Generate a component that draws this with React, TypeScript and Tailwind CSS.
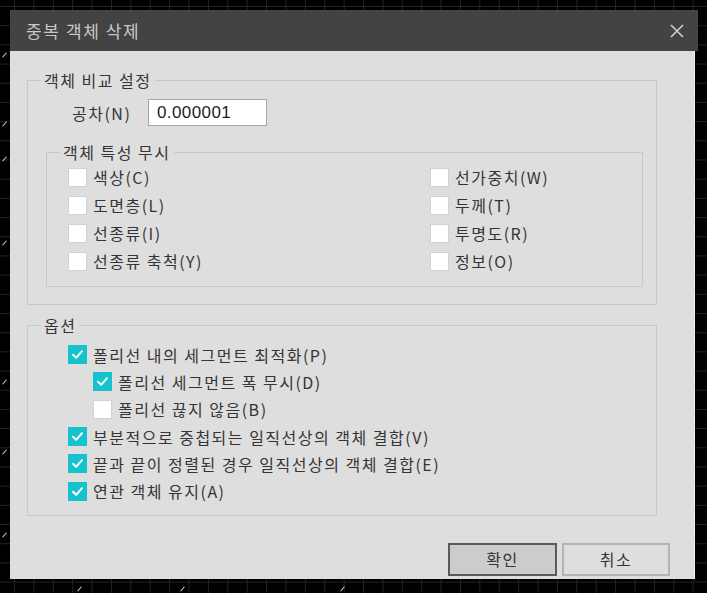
import { useState } from 'react';

const font = "font-['Malgun_Gothic','Noto_Sans_CJK_KR',sans-serif]";

type BoxProps = { checked: boolean; onToggle: () => void; label: string };

function CheckRow({ checked, onToggle, label }: BoxProps) {
  return (
    <label className="flex items-center gap-[6px] cursor-default select-none">
      <span
        onClick={onToggle}
        className={
          checked
            ? 'w-[19px] h-[19px] bg-[#14c3cb] flex items-center justify-center'
            : 'w-[19px] h-[19px] bg-white border border-[#d2d2d2]'
        }
      >
        {checked && (
          <svg width="13" height="13" viewBox="0 0 13 13" fill="none">
            <path d="M2 6.8 L5.2 9.8 L11 3.2" stroke="white" strokeWidth="2" strokeLinecap="round" strokeLinejoin="round" />
          </svg>
        )}
      </span>
      <span className="text-[16px] leading-none tracking-[1.5px] text-[#353535]">{label}</span>
    </label>
  );
}

const ignoreLeft = ['색상(C)', '도면층(L)', '선종류(I)', '선종류 축척(Y)'];
const ignoreRight = ['선가중치(W)', '두께(T)', '투명도(R)', '정보(O)'];

// little bits of the drawing behind the dialog
const ticks = [
  [4, 52], [4, 121], [4, 156], [4, 240], [4, 379], [4, 449], [4, 532], [79, 586], [182, 586], [342, 586],
];

export default function App() {
  const [ignore, setIgnore] = useState<Record<string, boolean>>({});
  const [opts, setOpts] = useState<boolean[]>([true, true, false, true, true, true]);

  const toggleIgnore = (k: string) => setIgnore(s => ({ ...s, [k]: !s[k] }));
  const toggleOpt = (i: number) => setOpts(s => s.map((v, j) => (j === i ? !v : v)));

  const options = [
    { label: '폴리선 내의 세그먼트 최적화(P)', sub: false },
    { label: '폴리선 세그먼트 폭 무시(D)', sub: true },
    { label: '폴리선 끊지 않음(B)', sub: true },
    { label: '부분적으로 중첩되는 일직선상의 객체 결합(V)', sub: false },
    { label: '끝과 끝이 정렬된 경우 일직선상의 객체 결합(E)', sub: false },
    { label: '연관 객체 유지(A)', sub: false },
  ];

  return (
    <div
      className={`${font} relative w-[707px] h-[593px] overflow-hidden bg-black bg-[linear-gradient(#242424_1px,transparent_1px),linear-gradient(90deg,#242424_1px,transparent_1px)] bg-[size:19.4px_19.2px] bg-[position:14px_6px] pt-[10px] pl-[10px]`}
    >
      {ticks.map(([x, y]) => (
        <span
          key={`${x}-${y}`}
          className="absolute w-[1px] h-[6px] bg-[#d8d8d8] rotate-[40deg]"
          style={{ left: x, top: y }}
        />
      ))}

      <div className="relative w-[688px] flex flex-col">
        {/* title bar */}
        <div className="h-[41px] bg-[#434343] flex items-center justify-between pl-[16px] pr-[14px]">
          <span className="text-[17px] tracking-[1.6px] text-[#c9c9c9]">중복 객체 삭제</span>
          <svg width="14" height="14" viewBox="0 0 14 14">
            <path d="M1 1 L13 13 M13 1 L1 13" stroke="#d0d0d0" strokeWidth="1.6" />
          </svg>
        </div>

        {/* body */}
        <div className="w-[685px] h-[528px] bg-[#dedede] border-r border-[#efefef] pl-[17px] pt-[18px] flex flex-col">
          <fieldset className="w-[630px] border border-[#c8c8c8] px-0 pb-[17px]">
            <legend className="ml-[13px] px-[3px] text-[16px] leading-[22px] tracking-[1.5px] text-[#353535]">객체 비교 설정</legend>
            <div className="flex items-center pt-[8px] pl-[44px]">
              <span className="text-[16px] tracking-[1.5px] text-[#353535] w-[76px]">공차(N)</span>
              <div className="w-[119px] h-[27px] bg-white border border-[#a6a6a6] flex items-center pl-[8px] text-[17px] tracking-[0.4px] text-[#1c1c1c] font-['Liberation_Sans','Noto_Sans_CJK_KR',sans-serif]">
                0.000001
              </div>
            </div>

            <fieldset className="mt-[15px] ml-[18px] w-[597px] border border-[#c8c8c8] pb-[11px]">
              <legend className="ml-[13px] px-[3px] text-[16px] leading-[22px] tracking-[1.5px] text-[#353535]">객체 특성 무시</legend>
              <div className="flex">
                <div className="w-[383px] pl-[21px] flex flex-col">
                  {ignoreLeft.map(k => (
                    <div key={k} className="h-[28px] flex items-center">
                      <CheckRow checked={!!ignore[k]} onToggle={() => toggleIgnore(k)} label={k} />
                    </div>
                  ))}
                </div>
                <div className="flex flex-col">
                  {ignoreRight.map(k => (
                    <div key={k} className="h-[28px] flex items-center">
                      <CheckRow checked={!!ignore[k]} onToggle={() => toggleIgnore(k)} label={k} />
                    </div>
                  ))}
                </div>
              </div>
            </fieldset>
          </fieldset>

          <fieldset className="mt-[9px] w-[630px] border border-[#c8c8c8] pt-[5px] pb-[10px]">
            <legend className="ml-[13px] px-[3px] text-[16px] leading-[22px] tracking-[1.5px] text-[#353535]">옵션</legend>
            {options.map((o, i) => (
              <div key={o.label} className={o.sub ? 'h-[27.3px] flex items-center pl-[65px]' : 'h-[27.3px] flex items-center pl-[40px]'}>
                <CheckRow checked={opts[i]} onToggle={() => toggleOpt(i)} label={o.label} />
              </div>
            ))}
          </fieldset>

          <div className="mt-[27px] flex justify-end gap-[5px] pr-[24px]">
            <button className="w-[109px] h-[33px] bg-[#cccccc] border-2 border-[#5a5a5a] text-[16px] tracking-[1.5px] text-[#353535]">확인</button>
            <button className="w-[108px] h-[33px] bg-[#dedede] border-2 border-[#b4b4b4] text-[16px] tracking-[1.5px] text-[#353535]">취소</button>
          </div>
        </div>
      </div>
    </div>
  );
}
